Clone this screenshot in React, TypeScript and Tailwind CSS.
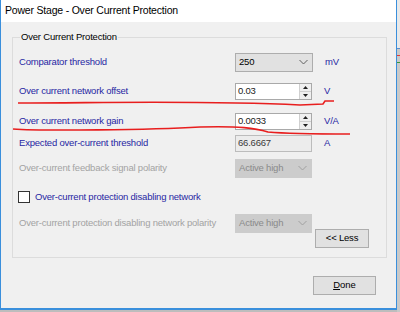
import React from "react";

const label = "text-[#2727a3] whitespace-nowrap";
const dis = "text-[#a3a3a3] whitespace-nowrap";

function Chevron({ color = "#606060" }: { color?: string }) {
  return (
    <svg width="9" height="6" viewBox="0 0 9 6" className="shrink-0">
      <path d="M0.5 1 L4.5 5 L8.5 1" fill="none" stroke={color} strokeWidth="1" />
    </svg>
  );
}

function Spinner() {
  return (
    <div className="flex h-full w-[12px] flex-col border-l border-[#d0d0d0] bg-[#f0f0f0]">
      <div className="flex flex-1 items-center justify-center border-b border-[#d0d0d0]">
        <svg width="5" height="3" viewBox="0 0 5 3"><path d="M0 3 L2.5 0 L5 3Z" fill="#222" /></svg>
      </div>
      <div className="flex flex-1 items-center justify-center">
        <svg width="5" height="3" viewBox="0 0 5 3"><path d="M0 0 L2.5 3 L5 0Z" fill="#222" /></svg>
      </div>
    </div>
  );
}

export default function App() {
  return (
    <div
      className="relative flex h-[312px] w-[400px] overflow-hidden bg-[#bdbdbd]"
      style={{ fontFamily: '"Liberation Sans", Arial, sans-serif' }}
    >
      {/* Window */}
      <div className="flex h-[310px] w-[397px] flex-col border-x border-b-2 border-[#3a8fdc] bg-[#f0f0f0]">
        {/* Title bar */}
        <div className="flex h-[22px] items-center bg-white pl-[4px] text-[10.5px] tracking-[-0.2px] text-black">
          Power Stage - Over Current Protection
        </div>
        <div className="flex flex-1 flex-col pl-[11px] pt-[9px]">
          <fieldset className="h-[227px] w-[375px] border border-[#dcdcdc] pl-[6px] pr-[6px]">
            <legend className="ml-[1px] px-[1px] text-[9.5px] leading-[12px] tracking-[-0.2px] text-black">
              Over Current Protection
            </legend>
            <div className="flex flex-col text-[9.5px] tracking-[-0.2px]">
              {/* Row 1 */}
              <div className="mt-[9px] flex h-[20px] items-center">
                <span className={`w-[216px] ${label}`}>Comparator threshold</span>
                <div className="flex h-[19px] w-[78px] items-center justify-between border border-[#adadad] bg-[#e1e1e1] pl-[3px] pr-[4px] text-black">
                  <span>250</span>
                  <Chevron />
                </div>
                <span className={`ml-[12px] ${label}`}>mV</span>
              </div>
              {/* Row 2 */}
              <div className="mt-[9px] flex h-[20px] items-center">
                <span className={`w-[216px] ${label}`}>Over current network offset</span>
                <div className="flex h-[17px] w-[77px] items-stretch border border-[#a9a9a9] bg-white">
                  <span className="flex flex-1 items-center pl-[2px] text-[#1a1a1a]">0.03</span>
                  <Spinner />
                </div>
                <span className={`ml-[12px] ${label}`}>V</span>
              </div>
              {/* Row 3 */}
              <div className="mt-[10px] flex h-[20px] items-center">
                <span className={`w-[216px] ${label}`}>Over current network gain</span>
                <div className="flex h-[17px] w-[77px] items-stretch border border-[#a9a9a9] bg-white">
                  <span className="flex flex-1 items-center pl-[2px] text-[#1a1a1a]">0.0033</span>
                  <Spinner />
                </div>
                <span className={`ml-[12px] ${label}`}>V/A</span>
              </div>
              {/* Row 4 */}
              <div className="mt-[2px] flex h-[20px] items-center">
                <span className={`w-[216px] ${label}`}>Expected over-current threshold</span>
                <div className="flex h-[17px] w-[77px] items-center border border-[#bcbcbc] bg-[#ececec] pl-[2px] text-[#3a3a3a]">
                  66.6667
                </div>
                <span className={`ml-[12px] ${label}`}>A</span>
              </div>
              {/* Row 5 */}
              <div className="mt-[5px] flex h-[20px] items-center">
                <span className={`w-[216px] ${dis}`}>Over-current feedback signal polarity</span>
                <div className="flex h-[19px] w-[77px] items-center justify-between border border-[#cccccc] bg-[#cccccc] pl-[3px] pr-[4px] text-[#8a8a8a]">
                  <span>Active high</span>
                  <Chevron color="#a0a0a0" />
                </div>
              </div>
              {/* Row 6 */}
              <div className="mt-[9px] flex h-[20px] items-center">
                <div className="ml-[-1px] h-[12px] w-[12px] border border-[#333333] bg-white" />
                <span className={`ml-[5px] ${label}`}>Over-current protection disabling network</span>
              </div>
              {/* Row 7 */}
              <div className="mt-[6px] flex h-[20px] items-center">
                <span className={`w-[216px] ${dis}`}>Over-current protection disabling network polarity</span>
                <div className="flex h-[19px] w-[77px] items-center justify-between border border-[#cccccc] bg-[#cccccc] pl-[3px] pr-[4px] text-[#8a8a8a]">
                  <span>Active high</span>
                  <Chevron color="#a0a0a0" />
                </div>
              </div>
              {/* Less */}
              <div className="mt-[-4px] flex h-[19px] justify-end pr-[11px]">
                <div className="flex h-[19px] w-[54px] items-center justify-center border border-[#adadad] bg-[#e1e1e1] text-black">
                  &lt;&lt; Less
                </div>
              </div>
            </div>
          </fieldset>
          <div className="mt-[18px] flex justify-end pr-[20px]">
            <div className="flex h-[19px] w-[63px] items-center justify-center border border-[#adadad] bg-[#e1e1e1] text-[9.5px] text-black">
              <span><span className="underline">D</span>one</span>
            </div>
          </div>
        </div>
      </div>
      {/* right strip details */}
      <div className="flex flex-1 flex-col bg-[#c9c9c9]">
        <div className="h-[48px] bg-[#e9e9e9]" />
        <div className="h-[1px] bg-[#5b8ecb]" />
        <div className="mt-[6px] h-[1px] bg-[#e03a3a]" />
        <div className="mt-[6px] h-[1px] bg-[#3a9a3a]" />
      </div>
      {/* Red annotation lines */}
      <svg className="pointer-events-none absolute left-0 top-0" width="400" height="312">
        <path d="M18 103 C 100 103, 200 100, 300 105 L 323 104 L 325 101 L 334 101" fill="none" stroke="#e81e1e" strokeWidth="1.6" />
        <path d="M13 129 C 40 131, 150 130, 200 127 C 240 126, 255 128, 268 132 C 290 134, 320 134, 350 134" fill="none" stroke="#e81e1e" strokeWidth="1.6" />
      </svg>
    </div>
  );
}
